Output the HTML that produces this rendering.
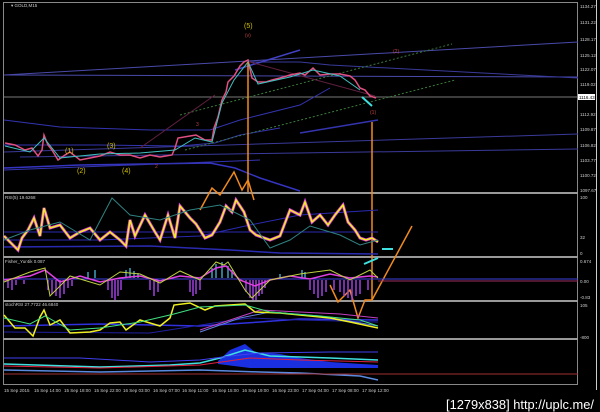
<!DOCTYPE html>
<html><head><meta charset="utf-8"><style>
html,body{margin:0;padding:0;background:#000;width:600px;height:412px;overflow:hidden}
svg{display:block}
text{font-family:"Liberation Sans",sans-serif;}
</style></head><body>
<svg width="600" height="412" viewBox="0 0 600 412" xmlns="http://www.w3.org/2000/svg">
<rect width="600" height="412" fill="#000"/>
<rect x="3.5" y="2.5" width="574" height="382" fill="none" stroke="#888" stroke-width="1"/>
<line x1="596.5" y1="0" x2="596.5" y2="390" stroke="#ccc" stroke-width="1"/>
<g stroke="#999" stroke-width="2">
<line x1="3" y1="193" x2="578" y2="193"/>
<line x1="3" y1="257" x2="578" y2="257"/>
<line x1="3" y1="301" x2="578" y2="301"/>
<line x1="3" y1="339" x2="578" y2="339"/>
</g>
<g fill="none" stroke-width="1">
<line x1="4" y1="75" x2="578" y2="42" stroke="#4a4aaa"/>
<line x1="4" y1="75" x2="578" y2="77" stroke="#4a4aaa"/>
<polyline points="250,62 300,62 330,65 578,78" stroke="#3a3a9a"/>
<line x1="4" y1="97" x2="578" y2="97" stroke="#777"/>
<polyline points="4,120 60,127 150,130 210,130 240,120 260,115 300,105 330,88" stroke="#3434b0"/>
<line x1="300" y1="133" x2="378" y2="120" stroke="#3434b0" stroke-width="1.5"/>
<line x1="4" y1="152" x2="578" y2="134" stroke="#3a3a9a"/>
<polyline points="4,145 100,145 180,146 215,143 240,135 280,128" stroke="#3434b0"/>
<polyline points="4,168 80,165 210,163 235,168 260,178 300,191" stroke="#3434c0" stroke-width="1.5"/>
<line x1="4" y1="170" x2="260" y2="160" stroke="#3434b0"/>
<line x1="20" y1="157" x2="578" y2="149" stroke="#3a3a9a"/>
<line x1="235" y1="70" x2="300" y2="50" stroke="#4040c0" stroke-width="1.5"/>
<line x1="180" y1="115" x2="452" y2="44" stroke="#3a7a3a" stroke-dasharray="2,2"/>
<line x1="185" y1="150" x2="455" y2="80" stroke="#3a7a3a" stroke-dasharray="2,2"/>
<line x1="140" y1="148" x2="215" y2="95" stroke="#602040"/>
<line x1="250" y1="62" x2="375" y2="96" stroke="#602040"/>
</g>
<polyline fill="none" stroke="#e05080" stroke-width="1.5" points="5,143 15,145 25,150 32,148 38,156 42,150 44,135 48,145 52,150 58,160 65,155 70,152 80,160 90,158 100,156 110,152 120,155 130,155 140,158 150,155 160,157 172,155 175,148 178,138 190,136 196,135 205,140 212,140 214,128 218,117 222,100 226,92 228,82 234,76 240,66 244,62 248,60 252,78 258,82 266,82 272,80 280,78 290,75 300,73 305,75 313,68 320,75 330,74 340,74 350,76 355,80 360,88 365,90 370,96 376,98"/>
<polyline fill="none" stroke="#40c0c0" stroke-width="1" points="5,146 30,152 44,138 60,158 100,154 140,153 175,150 195,138 212,142 222,103 234,80 248,62 258,84 290,77 313,70 340,76 360,90"/>
<g stroke="#f08a20" stroke-width="1.5" fill="none">
<line x1="248" y1="62" x2="248" y2="192"/>
<line x1="372" y1="122" x2="372" y2="300"/>
<polyline points="200,210 212,188 220,195 234,172 242,190 248,180 254,200"/>
<polyline points="330,285 338,302 350,290 358,318 365,300 372,300 412,226"/>
</g>
<g font-size="7" fill="#d4c000">
<text x="244" y="28">(5)</text><text x="65" y="153">(1)</text><text x="77" y="173">(2)</text><text x="107" y="148">(3)</text><text x="122" y="173">(4)</text>
</g>
<g font-size="5" fill="#c04040"><text x="245" y="37">(v)</text><text x="370" y="114">(1)</text><text x="393" y="53">(2)</text><text x="196" y="126">3</text><text x="155" y="168">2</text></g>
<g stroke="#40e0e0" stroke-width="2"><line x1="362" y1="97" x2="372" y2="106"/><line x1="382" y1="249" x2="393" y2="249"/><line x1="364" y1="264" x2="378" y2="258"/></g>
<g fill="none">
<line x1="4" y1="232" x2="378" y2="232" stroke="#2a2ab0"/>
<polyline points="4,240 100,240 200,236 250,225 300,215 378,210" stroke="#2a2ab0"/>
<polyline points="4,247 150,246 230,250 280,253 378,254" stroke="#2a2ab0" stroke-width="1.5"/>
<polyline points="4,236 10,242 18,250 22,238 28,230 34,218 40,236 44,208 50,228 60,225 70,238 80,232 90,228 100,240 110,232 120,240 126,246 130,220 135,236 145,215 155,232 160,240 168,215 175,238 180,206 190,218 196,224 205,238 212,235 220,222 226,206 232,212 236,200 244,212 250,230 256,235 270,240 280,236 290,210 300,215 305,202 312,222 320,215 328,225 335,215 343,205 348,222 355,230 360,238 366,240 372,238 378,242" stroke="#e040e0" stroke-width="3"/>
<polyline points="4,236 10,242 18,250 22,238 28,230 34,218 40,236 44,208 50,228 60,225 70,238 80,232 90,228 100,240 110,232 120,240 126,246 130,220 135,236 145,215 155,232 160,240 168,215 175,238 180,206 190,218 196,224 205,238 212,235 220,222 226,206 232,212 236,200 244,212 250,230 256,235 270,240 280,236 290,210 300,215 305,202 312,222 320,215 328,225 335,215 343,205 348,222 355,230 360,238 366,240 372,238 378,242" stroke="#f0f020" stroke-width="1.5"/>
<polyline points="4,240 30,230 60,222 90,240 112,198 130,215 160,220 190,210 220,205 250,220 270,248 290,240 310,226 340,235 360,245 378,240" stroke="#308080"/>
</g>
<line x1="4" y1="279" x2="578" y2="279" stroke="#4040e0"/>
<line x1="378" y1="281" x2="578" y2="281" stroke="#a03060"/>
<g stroke="#a040e0" stroke-width="1.5">
<line x1="8" y1="280" x2="8" y2="288"/><line x1="12" y1="280" x2="12" y2="290"/><line x1="16" y1="280" x2="16" y2="285"/><line x1="24" y1="280" x2="24" y2="284"/><line x1="48" y1="280" x2="48" y2="290"/><line x1="52" y1="280" x2="52" y2="294"/><line x1="56" y1="280" x2="56" y2="296"/><line x1="60" y1="280" x2="60" y2="298"/><line x1="64" y1="280" x2="64" y2="294"/><line x1="68" y1="280" x2="68" y2="288"/><line x1="72" y1="280" x2="72" y2="286"/><line x1="108" y1="280" x2="108" y2="290"/><line x1="112" y1="280" x2="112" y2="298"/><line x1="115" y1="280" x2="115" y2="300"/><line x1="118" y1="280" x2="118" y2="296"/><line x1="121" y1="280" x2="121" y2="290"/><line x1="150" y1="280" x2="150" y2="290"/><line x1="154" y1="280" x2="154" y2="296"/><line x1="158" y1="280" x2="158" y2="292"/><line x1="190" y1="280" x2="190" y2="292"/><line x1="193" y1="280" x2="193" y2="296"/><line x1="196" y1="280" x2="196" y2="294"/><line x1="200" y1="280" x2="200" y2="290"/><line x1="246" y1="280" x2="246" y2="292"/><line x1="250" y1="280" x2="250" y2="298"/><line x1="253" y1="280" x2="253" y2="300"/><line x1="256" y1="280" x2="256" y2="300"/><line x1="259" y1="280" x2="259" y2="296"/><line x1="262" y1="280" x2="262" y2="294"/><line x1="265" y1="280" x2="265" y2="288"/><line x1="310" y1="280" x2="310" y2="290"/><line x1="314" y1="280" x2="314" y2="294"/><line x1="318" y1="280" x2="318" y2="298"/><line x1="322" y1="280" x2="322" y2="296"/><line x1="326" y1="280" x2="326" y2="292"/><line x1="334" y1="280" x2="334" y2="290"/><line x1="340" y1="280" x2="340" y2="292"/><line x1="344" y1="280" x2="344" y2="296"/><line x1="348" y1="280" x2="348" y2="298"/><line x1="352" y1="280" x2="352" y2="300"/><line x1="356" y1="280" x2="356" y2="296"/><line x1="360" y1="280" x2="360" y2="294"/><line x1="368" y1="280" x2="368" y2="290"/>
</g>
<g stroke="#40a0c0" stroke-width="1.5">
<line x1="88" y1="278" x2="88" y2="272"/><line x1="95" y1="278" x2="95" y2="270"/><line x1="126" y1="278" x2="126" y2="270"/><line x1="130" y1="278" x2="130" y2="268"/><line x1="134" y1="278" x2="134" y2="271"/><line x1="138" y1="278" x2="138" y2="273"/><line x1="212" y1="278" x2="212" y2="268"/><line x1="216" y1="278" x2="216" y2="264"/><line x1="222" y1="278" x2="222" y2="262"/><line x1="228" y1="278" x2="228" y2="266"/><line x1="232" y1="278" x2="232" y2="270"/><line x1="280" y1="278" x2="280" y2="274"/><line x1="305" y1="278" x2="305" y2="272"/><line x1="302" y1="278" x2="302" y2="270"/>
</g>
<polyline fill="none" stroke="#e040e0" stroke-width="1.5" points="4,280 30,276 45,270 60,282 80,276 100,282 120,278 140,276 160,281 180,276 200,278 216,268 226,266 240,280 255,286 270,280 290,276 310,279 330,274 350,278 370,276 378,277"/>
<polyline fill="none" stroke="#c0d040" stroke-width="1" points="4,282 30,272 45,268 50,296 70,276 100,285 120,272 140,274 160,283 180,271 200,280 216,262 224,265 228,262 245,290 252,298 270,280 300,274 330,270 350,280 370,270 378,278"/>
<g fill="none">
<polyline points="4,326 100,324 200,326 260,322 300,319 378,320" stroke="#3030e0" stroke-width="1.5"/>
<polyline points="4,332 150,333 220,322 250,318 300,320 378,322" stroke="#2020a0"/>
<polyline points="200,330 230,320 260,310 300,312 340,314 378,318" stroke="#c040c0"/>
<polyline points="200,332 240,318 270,312 320,316 378,326" stroke="#6080e0"/>
<polyline points="4,315 15,328 25,328 33,336 40,317 44,310 50,325 60,320 70,333 90,332 100,330 110,323 120,322 126,330 140,320 160,326 170,318 174,305 190,303 205,310 215,306 245,304 255,312 280,313 300,315 330,318 350,322 378,328" stroke="#f0f020" stroke-width="1.5"/>
<polyline points="4,318 30,324 45,316 70,330 100,328 140,322 174,314 200,307 245,305 270,312 320,316 360,320 378,326" stroke="#40e080" stroke-width="1"/>
</g>
<path d="M218,361 L230,350 L245,344 L255,352 L280,354 L300,358 L330,362 L378,365 L378,368 L250,368 L218,364 Z" fill="#1a30e0"/>
<g fill="none">
<polyline points="4,364 100,367 170,365 200,363 220,358 245,350 270,356 330,358 378,360" stroke="#40e0e0" stroke-width="1.5"/>
<polyline points="4,366 100,368 200,365 250,358 300,360 378,362" stroke="#e02040" stroke-width="1"/>
<polyline points="4,358 80,358 150,362 200,360 230,356 260,353 330,352 378,352" stroke="#4040f0"/>
<polyline points="4,370 100,372 200,370 260,372 300,373 360,376 378,380" stroke="#5a8ae0" stroke-width="1.5"/>
<line x1="4" y1="374" x2="578" y2="374" stroke="#a03030"/>
</g>
<g font-size="4.5" fill="#ccc">
<text x="580" y="8">1134.27</text><text x="580" y="24">1131.22</text><text x="580" y="41">1128.17</text><text x="580" y="57">1125.12</text><text x="580" y="71">1122.07</text><text x="580" y="86">1119.02</text><text x="580" y="116">1112.92</text><text x="580" y="131">1109.87</text><text x="580" y="147">1106.82</text><text x="580" y="162">1103.77</text><text x="580" y="177">1100.72</text><text x="580" y="192">1097.67</text>
<text x="580" y="199">100</text><text x="580" y="239">32</text><text x="580" y="255">0</text><text x="580" y="263">0.674</text><text x="580" y="283">0.00</text><text x="580" y="299">-0.83</text><text x="580" y="307">105</text><text x="580" y="339">-800</text>
</g>
<rect x="578" y="94" width="17" height="6" fill="#fff"/>
<text x="579" y="99" font-size="4.5" fill="#000">1116.43</text>
<g font-size="4.5" fill="#ccc"><text x="11" y="7">▾ GOLD,M15</text><text x="5" y="199">RSI(5) 19.6268</text><text x="5" y="263">Fisher_Yur4ik 0.087</text><text x="5" y="306">stochRSI 27.7722 46.6840</text></g>
<g font-size="4.5" fill="#ccc">
<text x="4" y="392">15 Sep 2015</text><text x="34" y="392">15 Sep 14:00</text><text x="64" y="392">15 Sep 18:00</text><text x="94" y="392">15 Sep 22:00</text><text x="123" y="392">16 Sep 03:00</text><text x="153" y="392">16 Sep 07:00</text><text x="182" y="392">16 Sep 11:00</text><text x="212" y="392">16 Sep 15:00</text><text x="242" y="392">16 Sep 19:00</text><text x="272" y="392">16 Sep 23:00</text><text x="302" y="392">17 Sep 04:00</text><text x="332" y="392">17 Sep 08:00</text><text x="362" y="392">17 Sep 12:00</text>
</g>
<text x="446" y="409" font-size="13" fill="#fff" font-family="Liberation Mono,monospace" textLength="148" lengthAdjust="spacingAndGlyphs">[1279x838] http://uplc.me/</text>
</svg>
</body></html>
